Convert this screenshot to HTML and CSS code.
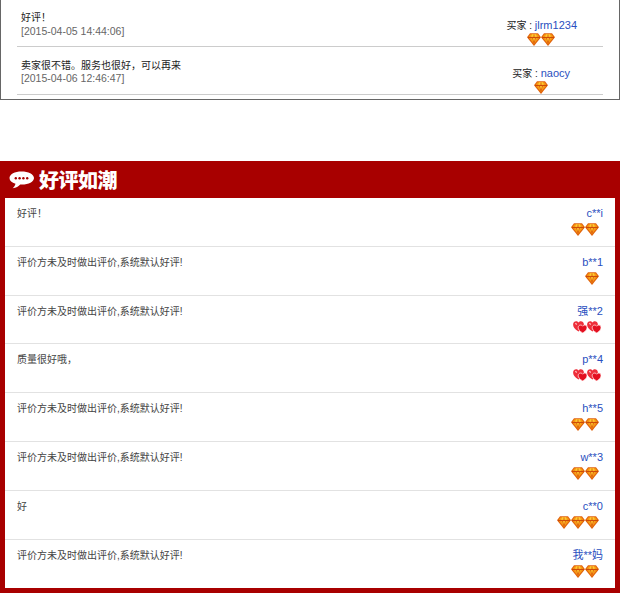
FILE: index.html
```html
<!DOCTYPE html>
<html lang="zh">
<head>
<meta charset="utf-8">
<title>好评如潮</title>
<link rel="stylesheet" href="styles.css">
</head>
<body>
<svg class="defs" width="0" height="0" aria-hidden="true">
  <symbol id="gem" viewBox="0 0 14 13">
    <path d="M3 .3h8L14 4.300 7 13 0 4.300z" fill="#e0620c"/>
    <path d="M3.600 1.200h6.800L12.700 4.300 7 11 1.300 4.300z" fill="#f99a14"/>
    <path d="M5 1.200h4L10 4.300 7 10.800 4 4.300z" fill="#ffcb30"/>
    <path d="M1 4.500h12" stroke="#cc4a08" stroke-width="1.200"/>
    <path d="M5.300 4.500 7 10.500M8.700 4.500 7 10.500M7 1.500V4" stroke="#dc5a0a" stroke-width=".9"/>
  </symbol>
  <symbol id="hearts" viewBox="0 0 14 13">
    <path d="M5.500 11.500C1.600 9 0 7 .1 4.200.3 1 4 .2 5.500 2.600 7 .2 10.700 1 10.900 4.200 11 7 9.400 9 5.500 11.500z" fill="#ee2e3a"/>
    <path d="M9.700 13C6.700 11.200 5 9.400 5.200 7.300c.2-2.400 3.200-3 4.500-1.100 1.300-1.900 4.100-1.300 4.300 1.100.2 2.100-1.300 3.900-4.300 5.700z" fill="#e30f20" stroke="#ffd0d0" stroke-width=".9"/>
    <path d="M2.300 3.300l1.500 1.100" stroke="#ffc4c4" stroke-width="1.200"/>
  </symbol>
</svg>

<section class="top-panel">
  <div class="top-row">
    <div class="top-text"><p class="top-msg">好评！</p><p class="top-date">[2015-04-05 14:44:06]</p></div>
    <div class="top-buyer top-buyer-a">
      <p class="buyer-line">买家 : <a class="name">jlrm1234</a></p>
      <div class="gems center"><svg class="ic"><use href="#gem"/></svg><svg class="ic"><use href="#gem"/></svg></div>
    </div>
  </div>
  <div class="top-row">
    <div class="top-text"><p class="top-msg">卖家很不错。服务也很好，可以再来</p><p class="top-date">[2015-04-06 12:46:47]</p></div>
    <div class="top-buyer top-buyer-b">
      <p class="buyer-line">买家 : <a class="name">naocy</a></p>
      <div class="gems center"><svg class="ic"><use href="#gem"/></svg></div>
    </div>
  </div>
</section>

<section class="praise">
  <h2 class="praise-title">
    <svg class="bubble" viewBox="0 0 25 18"><path d="M12.500 .5C5.800 .5.500 3.200.500 7c0 2.700 2.400 4.700 6 5.800-.4 1.800-1.500 3.400-2.800 4.400 3.300-.3 6-1.900 7.500-3.800.5 0 1.300.1 1.800.1 6.700 0 12-2.700 12-6.500S19.200.5 12.500.5z" fill="#fff"/><g fill="#a80000"><circle cx="6.800" cy="7.200" r="1.200"/><circle cx="10.600" cy="7.200" r="1.200"/><circle cx="14.400" cy="7.200" r="1.200"/><circle cx="18.200" cy="7.200" r="1.200"/></g></svg>
    <span class="title-text">好评如潮</span>
  </h2>
  <ul class="list">
    <li class="item"><p class="msg">好评！</p><div class="who"><a class="name">c**i</a><div class="gems"><svg class="ic"><use href="#gem"/></svg><svg class="ic"><use href="#gem"/></svg></div></div></li>
    <li class="item"><p class="msg">评价方未及时做出评价,系统默认好评!</p><div class="who"><a class="name">b**1</a><div class="gems"><svg class="ic"><use href="#gem"/></svg></div></div></li>
    <li class="item"><p class="msg">评价方未及时做出评价,系统默认好评!</p><div class="who"><a class="name">强**2</a><div class="gems gems-hearts"><svg class="ic"><use href="#hearts"/></svg><svg class="ic"><use href="#hearts"/></svg></div></div></li>
    <li class="item"><p class="msg">质量很好哦，</p><div class="who"><a class="name">p**4</a><div class="gems gems-hearts"><svg class="ic"><use href="#hearts"/></svg><svg class="ic"><use href="#hearts"/></svg></div></div></li>
    <li class="item"><p class="msg">评价方未及时做出评价,系统默认好评!</p><div class="who"><a class="name">h**5</a><div class="gems"><svg class="ic"><use href="#gem"/></svg><svg class="ic"><use href="#gem"/></svg></div></div></li>
    <li class="item"><p class="msg">评价方未及时做出评价,系统默认好评!</p><div class="who"><a class="name">w**3</a><div class="gems"><svg class="ic"><use href="#gem"/></svg><svg class="ic"><use href="#gem"/></svg></div></div></li>
    <li class="item"><p class="msg">好</p><div class="who"><a class="name">c**0</a><div class="gems"><svg class="ic"><use href="#gem"/></svg><svg class="ic"><use href="#gem"/></svg><svg class="ic"><use href="#gem"/></svg></div></div></li>
    <li class="item"><p class="msg">评价方未及时做出评价,系统默认好评!</p><div class="who"><a class="name">我**妈</a><div class="gems"><svg class="ic"><use href="#gem"/></svg><svg class="ic"><use href="#gem"/></svg></div></div></li>
  </ul>
</section>
</body>
</html>
```
FILE: styles.css
```css
* { box-sizing: border-box; }
html, body { margin: 0; padding: 0; background: #fff; }
body { font-family: "Liberation Sans", "Noto Sans CJK SC", sans-serif; font-size: 10px; color: #444; width: 620px; height: 597px; overflow: hidden; }
p, h2, ul { margin: 0; padding: 0; }
.defs { position: absolute; }

.top-panel { height: 100px; padding: 0 16px 5px; border: 1px solid #666; border-top: 0; display: flex; flex-direction: column; }
.top-row { height: 47px; display: flex; justify-content: space-between; border-bottom: 1px solid #ccc; padding: 0 0 0 4px; flex: none; }
.top-row + .top-row { height: 48px; }
.top-text { padding-top: 11px; }
.top-row + .top-row .top-text { padding-top: 12px; }
.top-msg { font-size: 10px; line-height: 13px; color: #222; }
.top-date { font-size: 10.500px; line-height: 14px; color: #666; }
.top-row + .top-row .top-date { line-height: 13px; }
.top-buyer { padding-top: 18px; text-align: center; }
.top-row + .top-row .top-buyer { padding-top: 19px; }
.top-buyer-a { margin-right: 26px; }
.top-buyer-b { margin-right: 33px; }
.buyer-line { font-size: 10px; line-height: 14px; color: #222; }
.name { color: #2a4fc0; font-size: 11px; }

.praise { margin-top: 61px; height: 432px; background: #a80000; padding: 0 5px 5px; display: flex; flex-direction: column; }
.praise-title { height: 37px; display: flex; align-items: center; gap: 5px; padding-left: 4px; color: #fff; font-family: "Noto Sans CJK SC", sans-serif; font-weight: 900; font-size: 20px; flex: none; }
.title-text { letter-spacing: -.5px; }
.bubble { width: 25px; height: 18px; flex: none; }
.list { list-style: none; background: #fff; flex: 1; display: flex; flex-direction: column; }
.item { height: 48.800px; flex: none; padding: 8px 12px 0; display: flex; justify-content: space-between; border-bottom: 1px solid #e2e2e2; }
.item:last-child { border-bottom: 0; }
.msg { line-height: 15px; }
.who { text-align: right; }
.who .name { display: block; line-height: 14px; }
.gems { display: flex; justify-content: flex-end; margin-top: 3px; padding-right: 4px; }
.gems-hearts { padding-right: 2px; margin-top: 2px; }
.gems.center { justify-content: center; padding-right: 1px; margin-top: 0; }
.ic { width: 14px; height: 13px; flex: none; }
```
